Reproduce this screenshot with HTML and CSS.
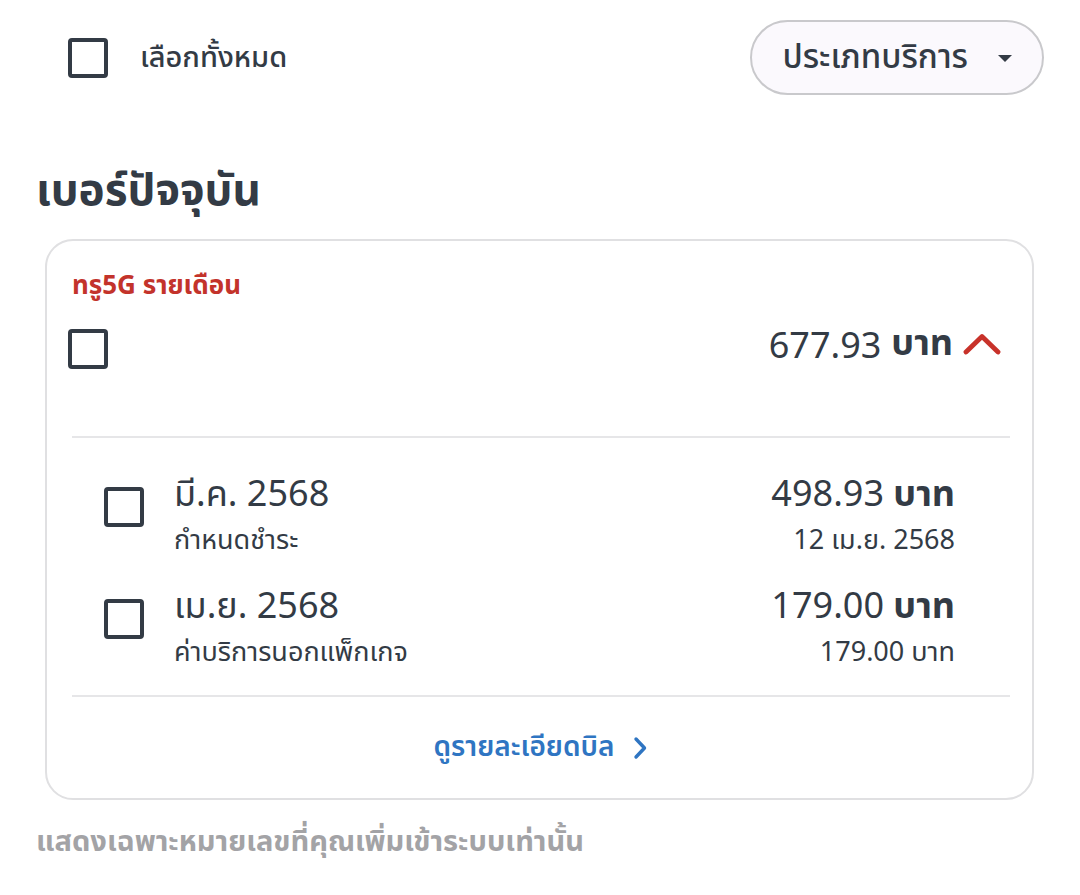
FILE: index.html
```html
<!DOCTYPE html>
<html lang="th">

<head>
    <meta charset="UTF-8">
    <meta name="viewport" content="width=device-width, initial-scale=1.0">
    <title>บิล</title>
    <link rel="stylesheet" href="styles.css">
</head>

<body>
    <div class="page">
        <div class="toolbar">
            <label class="select-all">
                <span class="box"></span>
                <span class="select-all-text">เลือกทั้งหมด</span>
            </label>
            <div class="filter">
                <span>ประเภทบริการ</span>
                <span class="caret"></span>
            </div>
        </div>

        <h2 class="title">เบอร์ปัจจุบัน</h2>

        <div class="card">
            <div class="plan">ทรู5G รายเดือน</div>
            <div class="card-head">
                <span class="box"></span>
                <div class="total">
                    <span class="amount">677.93</span>
                    <span class="unit">บาท</span>
                    <svg class="chev-up" width="38" height="24" viewBox="0 0 38 24">
                        <path d="M3 20 L19 4.5 L35 20" fill="none" stroke="#c8322a" stroke-width="4.8" stroke-linejoin="round" stroke-linecap="round" />
                    </svg>
                </div>
            </div>

            <div class="bills">
                <div class="bill">
                    <span class="box"></span>
                    <div class="bill-left">
                        <div class="bill-month">มี.ค. 2568</div>
                        <div class="bill-sub">กำหนดชำระ</div>
                    </div>
                    <div class="bill-right">
                        <div class="bill-amount">498.93 <b>บาท</b></div>
                        <div class="bill-sub">12 เม.ย. 2568</div>
                    </div>
                </div>
                <div class="bill">
                    <span class="box"></span>
                    <div class="bill-left">
                        <div class="bill-month">เม.ย. 2568</div>
                        <div class="bill-sub">ค่าบริการนอกแพ็กเกจ</div>
                    </div>
                    <div class="bill-right">
                        <div class="bill-amount">179.00 <b>บาท</b></div>
                        <div class="bill-sub">179.00 บาท</div>
                    </div>
                </div>
            </div>

            <div class="more">
                <a href="#">ดูรายละเอียดบิล</a>
                <svg width="16" height="26" viewBox="0 0 16 26">
                    <path d="M4 4 L12.5 13 L4 22" fill="none" stroke="#2f75c2" stroke-width="3.4" stroke-linecap="round" stroke-linejoin="round" />
                </svg>
            </div>
        </div>

        <p class="note">แสดงเฉพาะหมายเลขที่คุณเพิ่มเข้าระบบเท่านั้น</p>
    </div>
</body>

</html>
```

FILE: styles.css
```css
* {
    margin: 0;
    padding: 0;
    box-sizing: border-box;
}

body {
    background: #fff;
    color: #333b45;
    font-family: "Noto Sans", "Noto Sans Thai", "DejaVu Sans", sans-serif;
}

.page {
    width: 1080px;
    height: 895px;
    padding: 20px 36px 0 36px;
}

.box {
    display: inline-block;
    width: 40px;
    height: 40px;
    border: 4px solid #333b45;
    border-radius: 4px;
    flex-shrink: 0;
}

.toolbar {
    display: flex;
    align-items: center;
    justify-content: space-between;
    height: 75px;
}

.select-all {
    display: flex;
    align-items: center;
    padding-left: 32px;
    gap: 32px;
}

.select-all-text {
    font-size: 29px;
    font-weight: 500;
}

.filter {
    display: flex;
    align-items: center;
    gap: 30px;
    height: 75px;
    padding: 0 30px 0 30px;
    border: 2px solid #c9c9cc;
    border-radius: 38px;
    background: #fbf9fd;
    font-size: 33px;
    font-weight: 500;
}

.caret {
    width: 0;
    height: 0;
    margin-top: 2px;
    border-left: 7px solid transparent;
    border-right: 7px solid transparent;
    border-top: 7px solid #333b45;
}

.title {
    margin-top: 65px;
    font-size: 44px;
    font-weight: 700;
    line-height: 56px;
}

.card {
    margin: 23px 10px 0 9px;
    border: 2px solid #e0e0e2;
    border-radius: 28px;
    padding: 25px 22px 0 25px;
}

.plan {
    color: #c3332b;
    font-size: 26px;
    font-weight: 700;
    line-height: 36px;
}

.card-head {
    display: flex;
    align-items: flex-start;
    justify-content: space-between;
    height: 136px;
    padding-top: 27px;
    border-bottom: 2px solid #e6e6e8;
}

.card-head .box {
    margin-left: -4px;
}

.total {
    display: flex;
    align-items: center;
    gap: 10px;
    height: 40px;
    margin-top: -5px;
    margin-right: 9px;
    font-size: 36px;
}

.unit {
    font-weight: 700;
}

.bills {
    display: flex;
    flex-direction: column;
    gap: 20px;
    padding: 32px 55px 21px 32px;
    border-bottom: 2px solid #e6e6e8;
}

.bill {
    display: flex;
    align-items: flex-start;
}

.bill .box {
    margin-top: 17px;
}

.bill-left {
    flex: 1;
    padding-left: 30px;
}

.bill-right {
    text-align: right;
}

.bill-month,
.bill-amount {
    font-size: 36px;
    line-height: 46px;
}

.bill-amount b {
    font-weight: 700;
}

.bill-sub {
    font-size: 27px;
    line-height: 46px;
}

.more {
    display: flex;
    align-items: center;
    justify-content: center;
    gap: 18px;
    height: 101px;
}

.more a {
    color: #2f75c2;
    font-size: 28px;
    font-weight: 600;
    text-decoration: none;
}

.note {
    margin-top: 20px;
    color: #a3a3a6;
    font-size: 29px;
    font-weight: 700;
    line-height: 40px;
}
```
